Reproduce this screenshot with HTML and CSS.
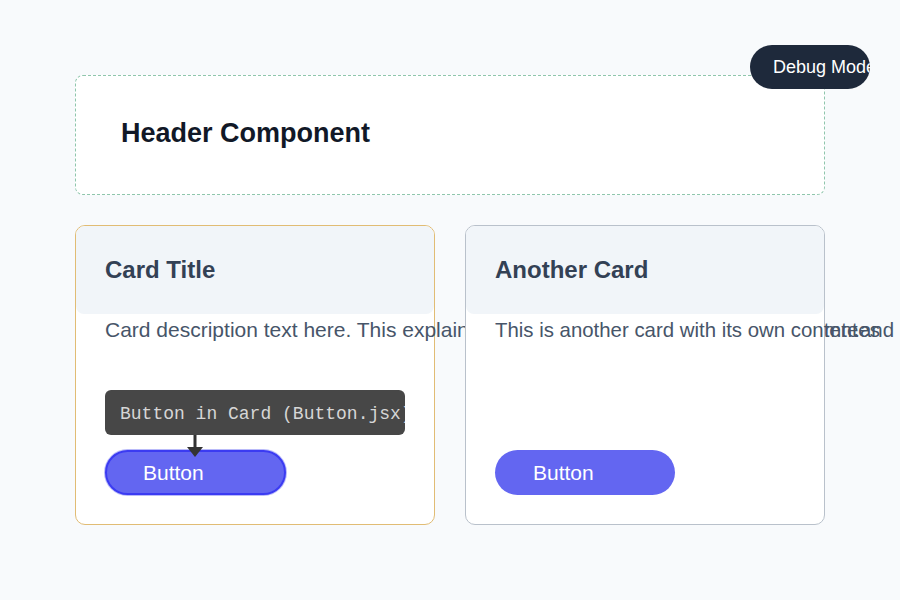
FILE: index.html
```html
<!DOCTYPE html>
<html lang="en">
<head>
<meta charset="utf-8">
<title>Debug Mode</title>
<link rel="stylesheet" href="styles.css">
</head>
<body>
<div class="page">
  <div class="debug-badge">Debug Mode</div>
  <header class="header-box">
    <h1 class="header-title">Header Component</h1>
  </header>
  <div class="cards">
    <div class="card card-warn">
      <div class="card-head"><h2 class="card-title">Card Title</h2></div>
      <p class="card-desc">Card description text here. This explains the component purpose.</p>
      <div class="card-foot">
        <div class="tooltip">
          <span class="tooltip-text">Button in Card (Button.jsx)</span>
          <svg class="tooltip-arrow" width="16" height="24" viewBox="0 0 16 24">
            <rect x="6.5" y="0" width="3" height="14" fill="#333333"/>
            <polygon points="0,12 16,12 8,22" fill="#333333"/>
          </svg>
        </div>
        <button class="btn btn-focus">Button</button>
      </div>
    </div>
    <div class="card card-plain">
      <div class="card-head"><h2 class="card-title">Another Card</h2></div>
      <p class="card-desc">This is another card with its own co<span class="blend-a">ntent</span><span class="blend-b">mtees</span>.and more text</p>
      <div class="card-foot">
        <button class="btn">Button</button>
      </div>
    </div>
  </div>
</div>
</body>
</html>
```
FILE: styles.css
```css
html, body {
  margin: 0;
  padding: 0;
  overflow: hidden;
}
body {
  background: #f8fafc;
  font-family: "Liberation Sans", Arial, sans-serif;
  width: 900px;
  height: 600px;
}
.page {
  position: relative;
  width: 750px;
  padding: 75px 0 0 75px;
}
.debug-badge {
  position: absolute;
  top: 45px;
  left: 750px;
  width: 120px;
  height: 44px;
  box-sizing: border-box;
  padding-left: 23px;
  border-radius: 22px;
  background: #1e293b;
  color: #ffffff;
  font-size: 18px;
  line-height: 44px;
  white-space: nowrap;
  overflow: hidden;
  z-index: 5;
}
.header-box {
  height: 120px;
  box-sizing: border-box;
  border: 1px dashed #8fc6ac;
  border-radius: 8px;
  background: #ffffff;
  padding-left: 45px;
  display: flex;
  align-items: center;
}
.header-title {
  margin: 0 0 4px 0;
  font-size: 27px;
  font-weight: 700;
  color: #111827;
}
.cards {
  margin-top: 30px;
  display: flex;
  gap: 30px;
}
.card {
  position: relative;
  width: 360px;
  height: 300px;
  box-sizing: border-box;
  border: 1px solid #cbd5e1;
  border-radius: 10px;
  background: #ffffff;
  display: flex;
  flex-direction: column;
}
.card-warn { border-color: #e1bc74; }
.card-plain { border-color: #b9c1cb; }
.card-head {
  height: 88px;
  background: #f1f5f9;
  border-radius: 9px 9px 8px 8px;
  padding-left: 29px;
  display: flex;
  align-items: center;
}
.card-title {
  margin: 0;
  font-size: 24px;
  font-weight: 700;
  color: #334155;
}
.card-desc {
  margin: 4px 0 0 0;
  padding-left: 29px;
  font-size: 21px;
  line-height: 24px;
  color: #475569;
  white-space: nowrap;
}
.card-plain .card-desc {
  font-size: 20.4px;
}
.blend-a {
  display: inline-block;
  width: 12px;
  overflow: visible;
}
.blend-b {
  display: inline-block;
  width: 30px;
  overflow: visible;
}
.card-foot {
  position: relative;
  margin-top: auto;
  margin-left: 29px;
  margin-bottom: 29px;
}
.btn {
  display: block;
  width: 180px;
  height: 45px;
  box-sizing: border-box;
  border: none;
  border-radius: 23px;
  background: #6366f1;
  color: #ffffff;
  font-family: "Liberation Sans", Arial, sans-serif;
  font-size: 21px;
  text-align: left;
  padding: 0 0 0 38px;
  cursor: pointer;
}
.btn-focus {
  width: 181px;
  border: 2px solid #3b3bf2;
  padding-left: 36px;
  box-shadow: 0 0 0 1px rgba(99, 102, 241, 0.45);
}
.tooltip {
  position: absolute;
  left: 0;
  bottom: 60px;
  width: 300px;
  height: 45px;
  box-sizing: border-box;
  padding-left: 15px;
  background: #474747;
  border-radius: 6px;
  z-index: 3;
}
.tooltip-text {
  display: block;
  height: 45px;
  overflow: hidden;
  white-space: nowrap;
  font-family: "Liberation Mono", "Courier New", monospace;
  font-size: 18px;
  line-height: 48px;
  color: #d6d6d6;
}
.tooltip-arrow {
  position: absolute;
  left: 82px;
  top: 45px;
}
```
